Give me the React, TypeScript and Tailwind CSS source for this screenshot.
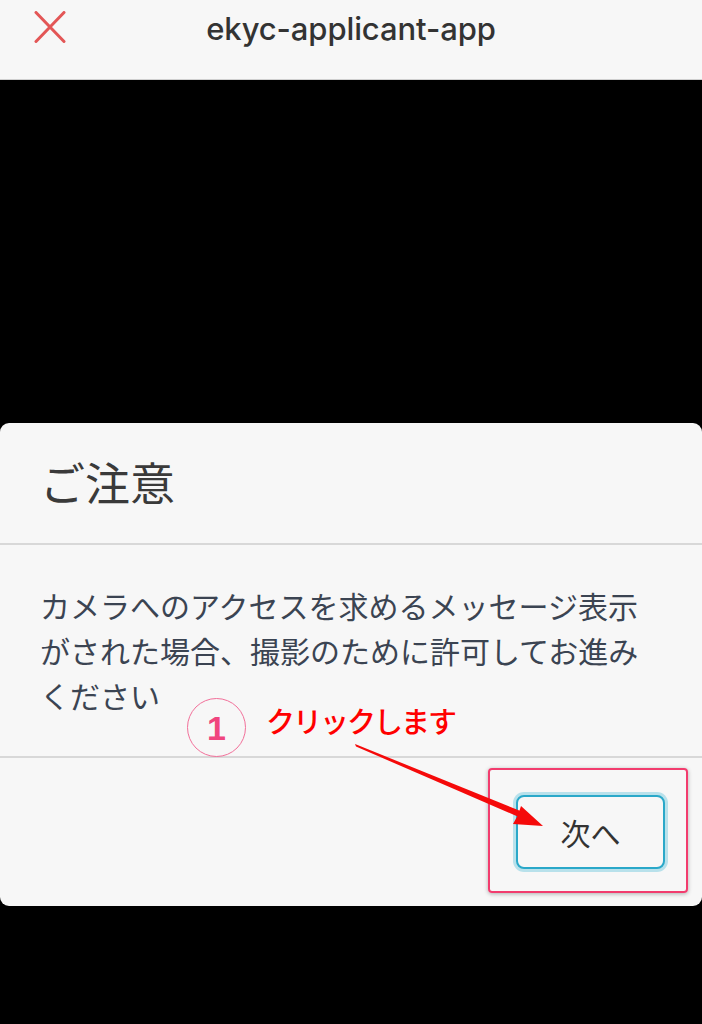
import React from "react";

const jp = { fontFamily: '"Noto Sans CJK JP", "Noto Sans", sans-serif' };

function CloseIcon() {
  return (
    <svg width="32" height="32" viewBox="0 0 32 32" className="block">
      <path d="M2 1.5 L30 30.5 M30 1.5 L2 30.5" stroke="#e35656" strokeWidth="3" strokeLinecap="round" />
    </svg>
  );
}

function Annotations() {
  return (
    <>
      {/* step marker */}
      <div
        className="absolute left-[187px] top-[698px] w-[59px] h-[59px] rounded-full border-[1.5px] border-[#f2709a] flex items-center justify-center text-[#f0457e] text-[34px] font-bold leading-none"
        style={{ fontFamily: '"Liberation Sans", Arial, sans-serif' }}
      >
        1
      </div>
      <div className="absolute left-[266px] top-[700px] text-[#ff0000] text-[29px] font-medium leading-[40px] tracking-[-2px]" style={jp}>
        クリックします
      </div>

      {/* highlight around the button */}
      <div className="absolute left-[488px] top-[768px] w-[200px] h-[125px] rounded-[4px] border-2 border-[#f23c6e] shadow-[0_1px_4px_rgba(0,0,0,0.3)]" />

      <svg className="absolute left-0 top-0 pointer-events-none" width="702" height="1024">
        <polygon points="355,744 356,746.5 521,818 523,812" fill="#f50a0a" />
        <polygon points="543,826 513,824 518,815 521,806" fill="#f50a0a" />
      </svg>
    </>
  );
}

export default function App() {
  return (
    <div className="relative w-[702px] h-[1024px] bg-black flex flex-col overflow-hidden">
      <header className="h-[80px] shrink-0 bg-[#f7f7f7] border-b border-[#cfcfcf] relative flex items-center justify-center pb-[20px]">
        <div className="absolute left-[34px] top-[11px]">
          <CloseIcon />
        </div>
        <h1
          className="text-[31px] font-medium text-[#333333] tracking-[-0.1px]"
          style={{ fontFamily: 'Inter, "Noto Sans", sans-serif' }}
        >
          ekyc-applicant-app
        </h1>
      </header>

      <div className="mt-[343px] bg-[#f7f7f7] rounded-[9px] flex flex-col" style={jp}>
        <div className="h-[120px] flex items-center px-[40px] pb-[4px]">
          <h2 className="text-[45px] text-[#3a3a3a] leading-none">ご注意</h2>
        </div>
        <div className="h-[2px] bg-[#d8d8d8]" />
        <div className="pt-[38px] pb-[38px] pl-[40px] pr-[40px]">
          <p className="text-[30px] leading-[45px] text-[#3b4452]">
            カメラへのアクセスを求めるメッセージ表示がされた場合、撮影のために許可してお進みください
          </p>
        </div>
        <div className="h-[2px] bg-[#d8d8d8]" />
        <div className="h-[148px] flex items-center justify-end pr-[37px]">
          <button className="w-[149px] h-[74px] rounded-[8px] border-2 border-[#2aa8c9] shadow-[0_0_0_3px_#b8e1eb] bg-[#f7f7f7] text-[30px] text-[#333333] flex items-center justify-center">
            次へ
          </button>
        </div>
      </div>

      <Annotations />
    </div>
  );
}
